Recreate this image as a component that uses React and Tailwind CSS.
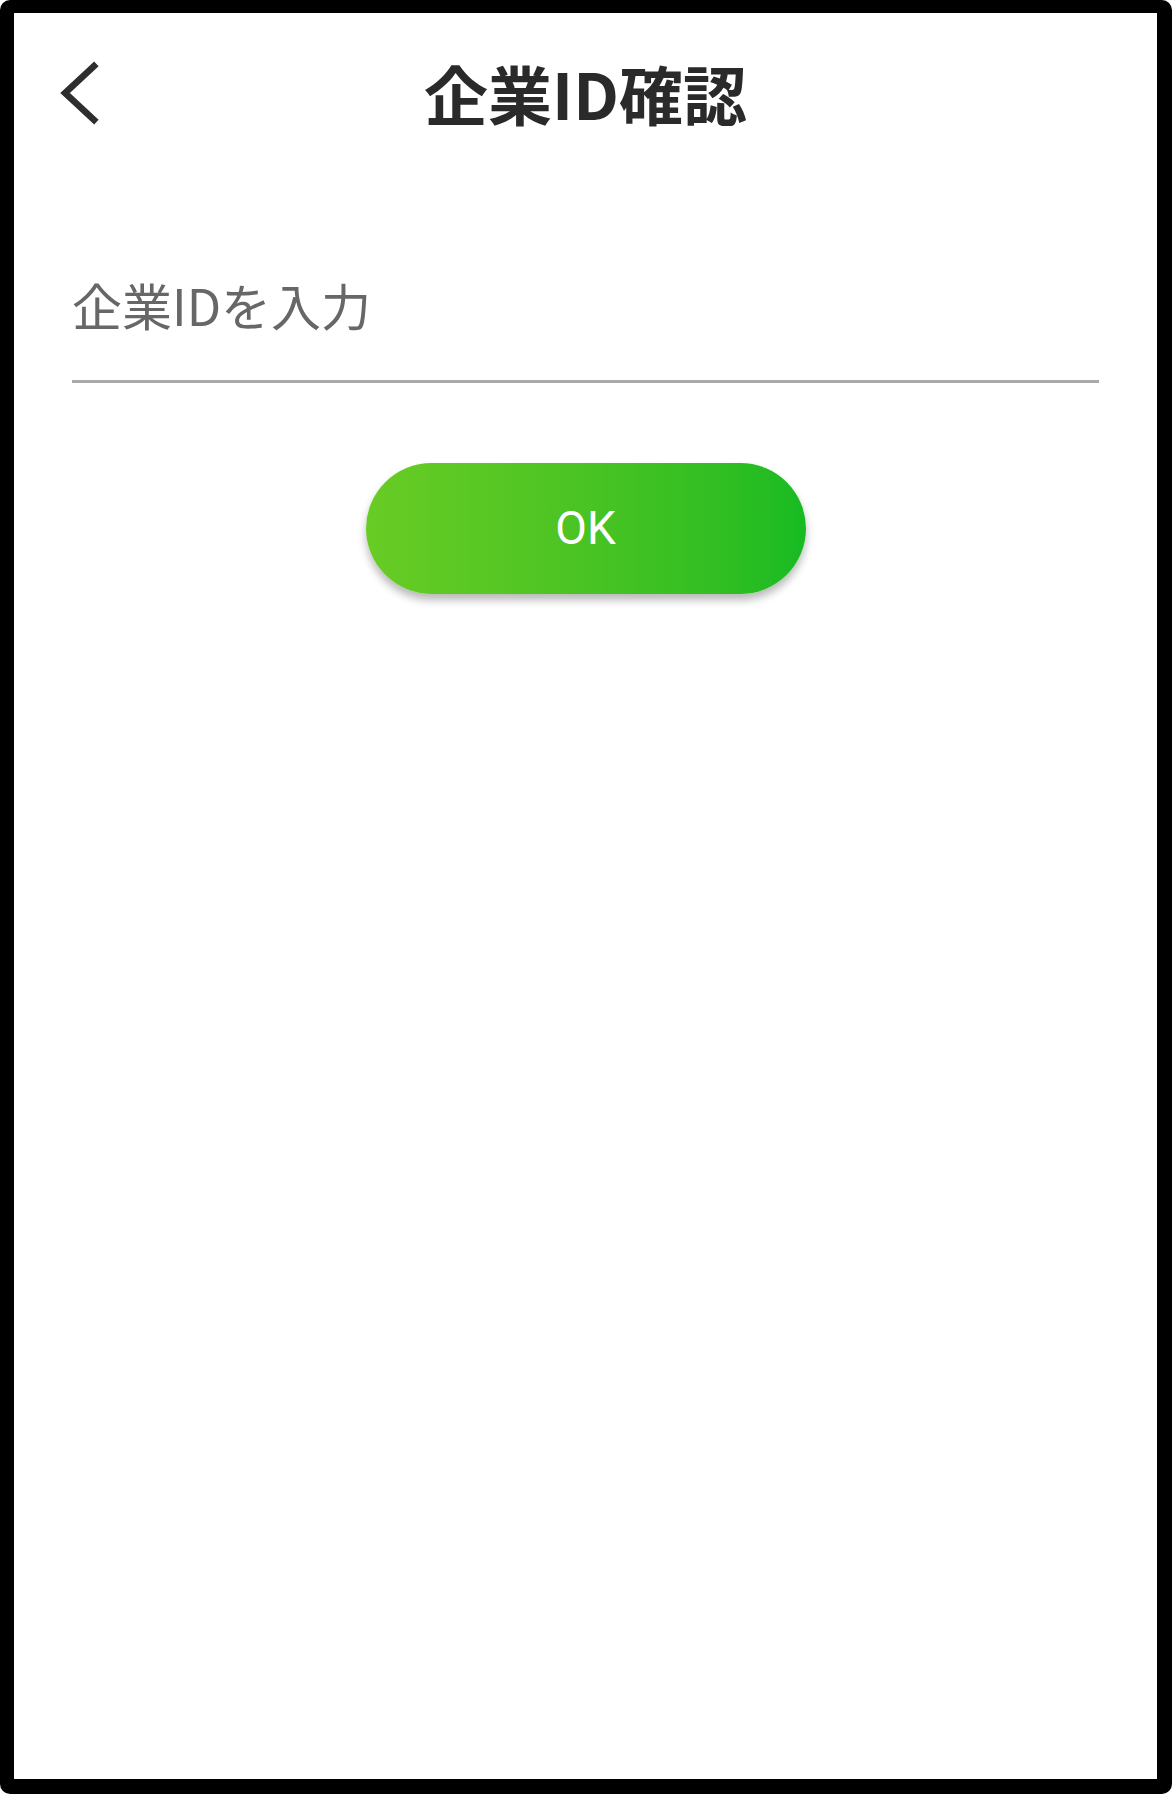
export default function App() {
  return (
    <div className="w-[1172px] h-[1794px] bg-white">
      <div className="h-full w-full border-black border-l-[14px] border-t-[13px] border-r-[15px] border-b-[15px] rounded-[10px] bg-white flex flex-col">
        {/* Header */}
        <div className="h-[158px] grid grid-cols-[1fr_auto_1fr] items-center">
          <button className="justify-self-start ml-[46px] mt-[2px] flex items-center">
            <svg width="40" height="64" viewBox="0 0 40 64" fill="none">
              <path d="M34 5 L5 32 L34 59" stroke="#2e2e2e" strokeWidth="6.5" strokeLinecap="square" strokeLinejoin="miter" />
            </svg>
          </button>
          <h1 className="text-[64px] leading-none font-bold text-[#2a2a2a] font-['Noto_Sans_CJK_JP','Noto_Sans',sans-serif]">
            企業ID確認
          </h1>
          <div />
        </div>

        {/* Input */}
        <div className="mx-[58px] mt-[109px]">
          <input
            className="w-full h-[103px] pb-[52px] text-[50px] leading-none text-[#333] placeholder-[#676767] bg-transparent outline-none border-b-[3px] border-[#a9a9a9] font-['Noto_Sans_CJK_JP','Noto_Sans',sans-serif] font-normal"
            placeholder="企業IDを入力"
          />
        </div>

        {/* Button */}
        <div className="flex justify-center mt-[80px]">
          <button className="w-[440px] h-[131px] rounded-full bg-gradient-to-r from-[#68cc24] to-[#16bb22] shadow-[0_6px_9px_rgba(0,0,0,0.28)] text-white text-[46px] font-['Roboto','Noto_Sans',sans-serif]">
            OK
          </button>
        </div>
      </div>
    </div>
  );
}
